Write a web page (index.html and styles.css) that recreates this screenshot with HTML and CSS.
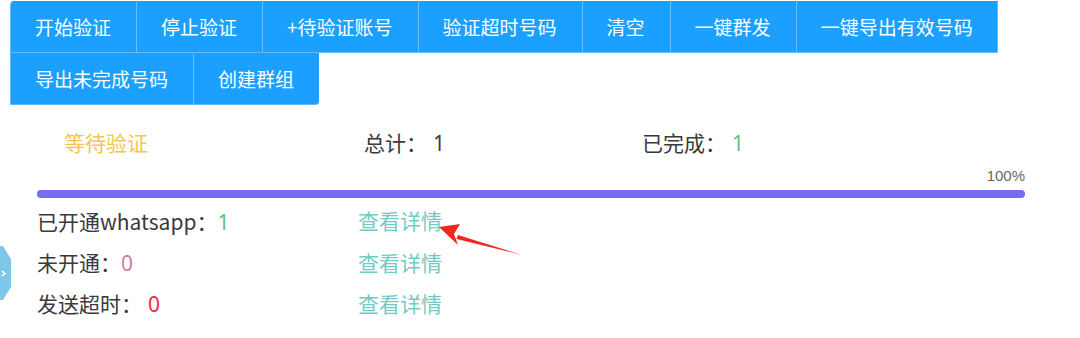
FILE: index.html
```html
<!DOCTYPE html>
<html lang="zh-CN">
  <head>
    <meta charset="utf-8">
    <title>验证</title>
    <link rel="stylesheet" href="styles.css">
  </head>
  <body>
    <div class="page">
      <div class="toolbar">
        <div class="btn first">开始验证</div>
        <div class="btn">停止验证</div>
        <div class="btn">+待验证账号</div>
        <div class="btn">验证超时号码</div>
        <div class="btn">清空</div>
        <div class="btn">一键群发</div>
        <div class="btn">一键导出有效号码</div>
        <div class="btn">导出未完成号码</div>
        <div class="btn last">创建群组</div>
      </div>

      <div class="status">
        <div class="state">等待验证</div>
        <div>总计：<span class="num">1</span></div>
        <div>已完成：<span class="num green">1</span></div>
      </div>

      <div class="progress">
        <div class="pct">100%</div>
        <div class="track"><div class="bar" style="width: 100%"></div></div>
      </div>

      <div class="results">
        <div><span class="cjk">已开通whatsapp：</span><span class="green">1</span></div>
        <div class="link">查看详情</div>
        <div>未开通：<span class="pink">0</span></div>
        <div class="link">查看详情</div>
        <div>发送超时：<span class="num red">0</span></div>
        <div class="link">查看详情</div>
      </div>

      <svg class="arrow" width="90" height="40" viewBox="0 0 90 40">
        <path d="M84 33 L20 13 L18.5 17 Z" fill="#ee2a20"/>
        <path d="M1 5 L22 2 L16 12 L20 23 Z" fill="#ee2a20"/>
      </svg>

      <svg class="side-tab" width="14" height="56" viewBox="0 0 14 56">
        <path d="M-6 0 L3 0 L11 13 L11 41 L3 54 L-6 54 Z" fill="#7fc7ea"/>
        <path d="M2 25 L5 27.5 L2 30" stroke="#fff" stroke-width="1.6" fill="none"/>
      </svg>
    </div>
  </body>
</html>
```

FILE: styles.css
```css
* {
  margin: 0;
  box-sizing: border-box;
}
body {
  background: #fff;
  font-family: "Noto Sans", "Noto Sans CJK SC", sans-serif;
  color: #3a3a3a;
}
.page {
  position: relative;
  width: 1080px;
  height: 338px;
  overflow: hidden;
}
.toolbar {
  display: flex;
  flex-wrap: wrap;
  width: 1060px;
  margin: 1px 0 0 10px;
}
.btn {
  height: 52px;
  padding: 0 24px;
  background-color: #1ca0ff;
  color: #fff;
  font-family: "Noto Sans CJK SC", sans-serif;
  font-size: 19px;
  line-height: 50px;
  border: 1px solid #1ca0ff;
  border-left-color: #66c0ff;
  border-bottom-color: #5fbcff;
}
.btn.first {
  border-radius: 4px 0 0 0;
}
.btn.last {
  border-radius: 0 0 4px 0;
  border-right-color: #1ca0ff;
}
.toolbar .btn:nth-child(7) {
  border-right-color: #66c0ff;
}
.status {
  display: grid;
  grid-template-columns: 300px 278px auto;
  padding-left: 64px;
  margin-top: 23px;
  font-size: 21px;
  line-height: 30px;
}
.state {
  color: #f7c44c;
}
.num {
  margin-left: 6px;
}
.green {
  color: #5dbf8c;
}
.pink {
  color: #d27aa6;
}
.red {
  color: #ee2b47;
}
.cjk {
  font-family: "Noto Sans CJK SC", sans-serif;
}
.progress {
  width: 988px;
  margin: 9px 0 0 37px;
}
.pct {
  text-align: right;
  font-family: "Liberation Sans", sans-serif;
  font-size: 15px;
  line-height: 18px;
  color: #666;
}
.track {
  height: 8px;
  margin-top: 5px;
  border-radius: 4px;
  background: #ebeef5;
}
.bar {
  height: 8px;
  border-radius: 4px;
  background: #766cf6;
}
.results {
  display: grid;
  grid-template-columns: 321px auto;
  padding-left: 37px;
  margin-top: 3px;
  font-size: 21px;
  line-height: 41px;
}
.link {
  color: #74cbc4;
}
.arrow {
  position: absolute;
  left: 438px;
  top: 222px;
}
.side-tab {
  position: absolute;
  left: 0;
  top: 246px;
}
```
